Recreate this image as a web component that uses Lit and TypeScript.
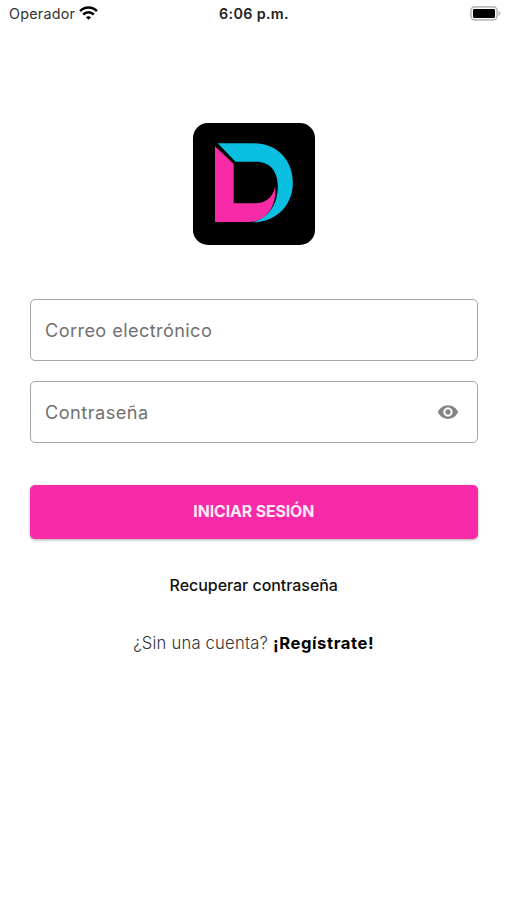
import { LitElement, html, css } from "lit";
import { customElement } from "lit/decorators.js";

@customElement("app-root")
export class AppRoot extends LitElement {
  static styles = css`
    :host {
      display: flex;
      flex-direction: column;
      height: 900px;
      background: #fff;
      color: #111;
      font-family: Inter, "Liberation Sans", sans-serif;
      overflow: hidden;
    }
    .status {
      display: grid;
      grid-template-columns: 1fr auto 1fr;
      align-items: center;
      height: 28px;
      padding: 0 6px 0 9px;
      box-sizing: border-box;
      font-size: 14px;
      line-height: 28px;
    }
    .carrier { display: flex; align-items: center; gap: 4px; color: #333; }
    .carrier span { font-size: 14.3px; letter-spacing: 0.25px; }
    .carrier svg { margin-top: -2px; }
    .time { margin-right: 2px; font-size: 14.3px; font-weight: 600; letter-spacing: 0.35px; color: #222; }
    .battery { justify-self: end; margin-top: -1px; }
    svg { display: block; }
    main {
      display: flex;
      flex-direction: column;
      padding: 95px 29.5px 0 30px;
    }
    .logo { align-self: center; width: 122px; height: 122px; }
    .field {
      display: flex;
      align-items: center;
      justify-content: space-between;
      box-sizing: border-box;
      height: 62px;
      padding: 0 18px 0 14px;
      border: 1px solid #a6a6a6;
      border-radius: 5px;
      font-size: 18.2px;
      letter-spacing: 0.38px;
      color: #717171;
    }
    .field span { margin-top: -1px; }
    .email { margin-top: 54px; }
    .password { margin-top: 20px; }
    .password span { letter-spacing: 0.45px; }
    .submit {
      margin: 42px 0 0;
      height: 54px;
      padding: 0;
      border: 0;
      border-radius: 5px;
      background: #f72aa7;
      box-shadow: 0 1px 3px rgba(0, 0, 0, 0.35);
      color: #ffeaf8;
      font: 700 15.8px/54px Inter, "Liberation Sans", sans-serif;
      letter-spacing: -0.08px;
      text-align: center;
    }
    .recover {
      margin-top: 34px;
      font-size: 16px;
      font-weight: 500;
      letter-spacing: -0.05px;
      line-height: 24px;
      text-align: center;
    }
    .register {
      margin-top: 34px;
      font-size: 16.6px;
      font-weight: 300;
      letter-spacing: 0.22px;
      line-height: 24px;
      text-align: center;
      color: #333;
    }
    .register b { font-weight: 700; letter-spacing: 0.6px; color: #000; }
  `;

  render() {
    return html`
      <header class="status">
        <div class="carrier">
          <span>Operador</span>
          <svg width="19" height="14" viewBox="0 0 19 14" fill="none" stroke="#000" stroke-width="2.5">
            <path d="M1.1 5.2C5.8.4 13.2.4 17.9 5.2" />
            <path d="M4.2 8.5c3-3 7.6-3 10.6 0" />
            <path d="M9.5 13.8 6.9 11.2c1.5-1.4 3.7-1.4 5.2 0z" fill="#000" stroke="none" />
          </svg>
        </div>
        <div class="time">6:06 p.m.</div>
        <svg class="battery" width="31" height="15" viewBox="0 0 31 15">
          <rect x=".9" y=".9" width="26.2" height="13" rx="3.8" fill="#fff" stroke="#bcbcbc" stroke-width="1.7" />
          <rect x="3" y="3" width="22" height="9" rx="1.2" fill="#000" />
          <path d="M28.5 5c2.6 1 2.6 4 0 5z" fill="#bcbcbc" />
        </svg>
      </header>
      <main>
        <svg class="logo" viewBox="0 0 122 122">
          <rect width="122" height="122" rx="15" fill="#000" />
          <path fill="#0bbfe0" d="M24.7 20.3H61C84 20.3 99.8 37 99.8 59.7 99.8 82 84 99.3 59 99.3 76 95 84.8 81 84.8 63.5 84.8 48 77 38.7 63 38.7H42.5Z" />
          <path fill="#f72aa7" d="M22 23.2 40.7 41V80.3H62C73 80.3 80 74 82.2 63.5 84 83 73.5 99 55.3 99H22Z" />
        </svg>
        <div class="field email"><span>Correo electrónico</span></div>
        <div class="field password">
          <span>Contraseña</span>
          <svg width="22" height="22" viewBox="0 0 24 24" fill="#858585">
            <path d="M12 4.5C7 4.5 2.73 7.61 1 12c1.73 4.39 6 7.5 11 7.5s9.27-3.11 11-7.5c-1.73-4.39-6-7.5-11-7.5zM12 17c-2.76 0-5-2.24-5-5s2.24-5 5-5 5 2.24 5 5-2.24 5-5 5zm0-8c-1.66 0-3 1.34-3 3s1.34 3 3 3 3-1.34 3-3-1.34-3-3-3z" />
          </svg>
        </div>
        <button class="submit">INICIAR SESIÓN</button>
        <div class="recover">Recuperar contraseña</div>
        <div class="register">¿Sin una cuenta? <b>¡Regístrate!</b></div>
      </main>
    `;
  }
}
